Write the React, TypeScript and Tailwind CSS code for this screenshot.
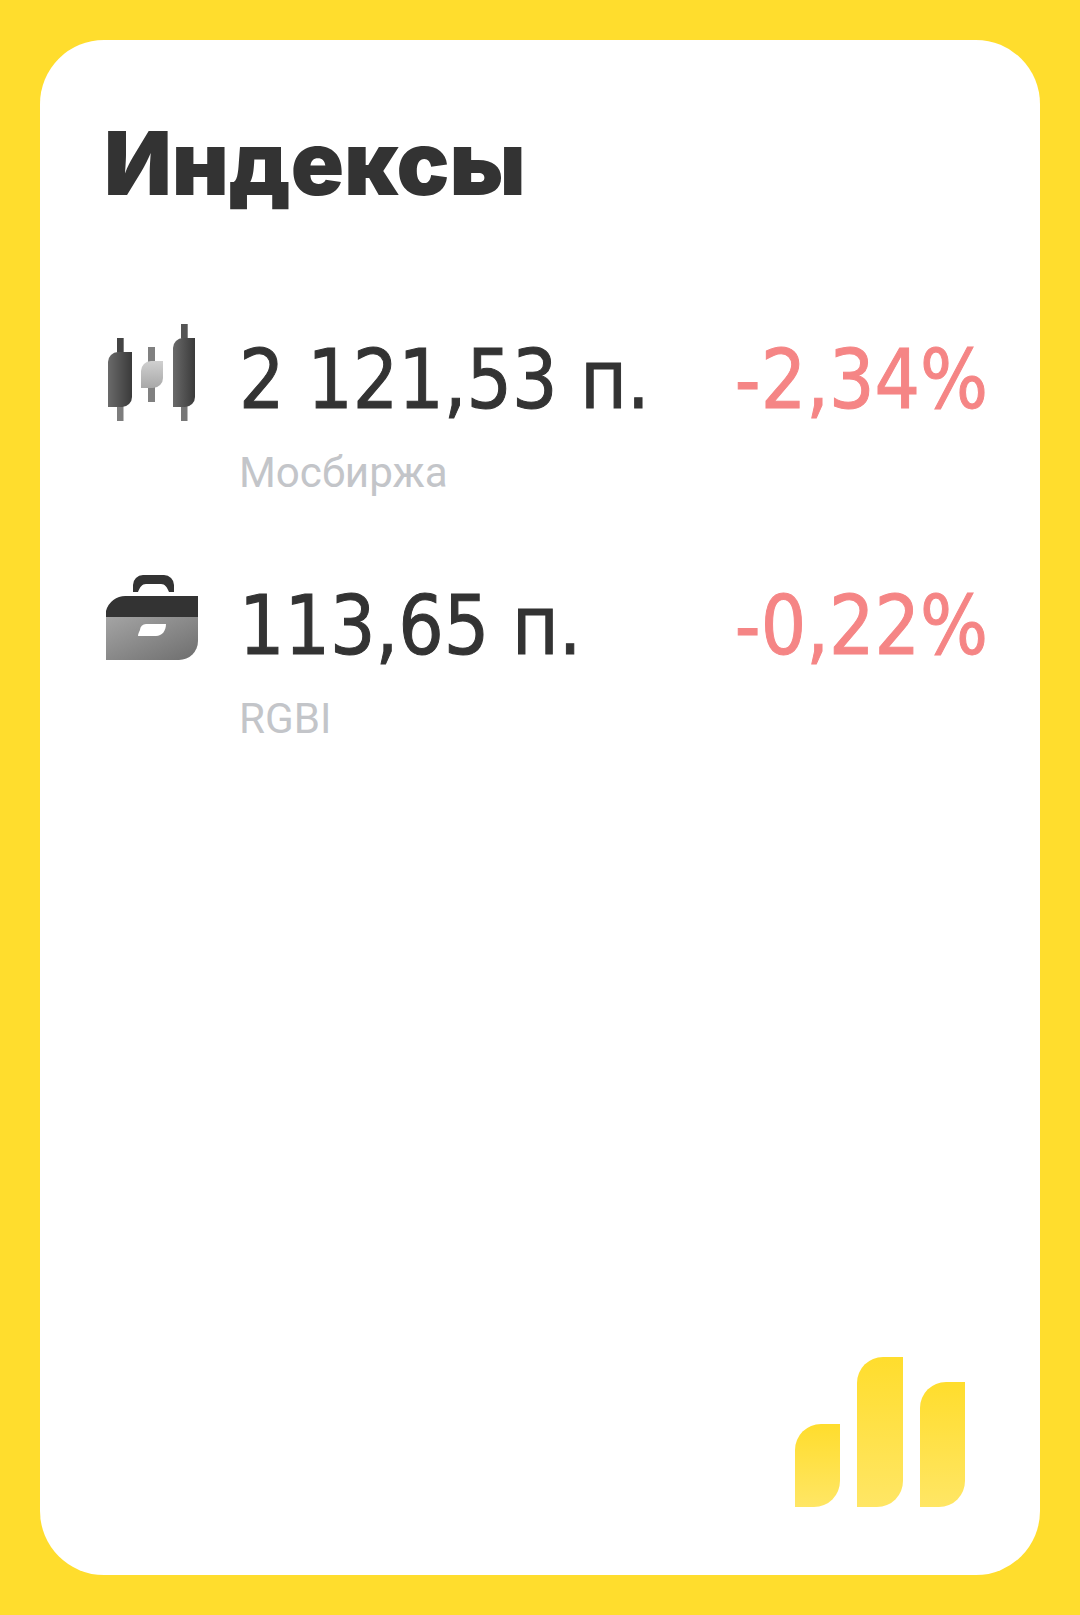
import React from 'react';

const CandlesIcon = () => (
  <svg width="95" height="105" viewBox="0 0 95 105" fill="none" className="shrink-0 -mt-[2px]">
    <defs>
      <linearGradient id="candleDark" x1="0" y1="0" x2="1" y2="0">
        <stop offset="0" stopColor="#6a6a6a" />
        <stop offset="1" stopColor="#3a3a3a" />
      </linearGradient>
      <linearGradient id="candleLight" x1="0" y1="0" x2="0" y2="1">
        <stop offset="0" stopColor="#d0d0d0" />
        <stop offset="1" stopColor="#a8a8a8" />
      </linearGradient>
    </defs>
    <rect x="12" y="18" width="6.5" height="83" fill="#7d7d7d" />
    <path d="M3 42a10 10 0 0 1 10-10h14v45a10 10 0 0 1-10 10H3z" fill="url(#candleDark)" />
    <rect x="12" y="18" width="6.5" height="14" fill="#444" />
    <rect x="43" y="27" width="7" height="55" fill="#808080" />
    <path d="M36 51a10 10 0 0 1 10-10h12v17a10 10 0 0 1-10 10H36z" fill="url(#candleLight)" />
    <rect x="76" y="4" width="6.5" height="97" fill="#777" />
    <path d="M68 28a10 10 0 0 1 10-10h12v59a10 10 0 0 1-10 10H68z" fill="url(#candleDark)" />
    <rect x="76" y="4" width="6.5" height="14" fill="#555" />
  </svg>
);

const BriefcaseIcon = () => (
  <svg width="95" height="90" viewBox="0 0 95 90" fill="none" className="shrink-0 -ml-[2px] mt-[2px]">
    <defs>
      <linearGradient id="caseBody" x1="0" y1="0" x2="1" y2="1">
        <stop offset="0" stopColor="#a4a4a4" />
        <stop offset="1" stopColor="#6e6e6e" />
      </linearGradient>
    </defs>
    <path d="M30 22v-7a10 10 0 0 1 10-10h21a10 10 0 0 1 10 10v7h-5c-2-5-4-8-8-8H43c-4 0-6 3-8 8z" fill="#333" />
    <path d="M3 47v-6a20 20 0 0 1 20-15h72v21z" fill="#333" />
    <path d="M3 47h92v24a19 19 0 0 1-19 19H3z" fill="url(#caseBody)" />
    <path d="M37 60a6 6 0 0 1 6-6h20c0 7-4 12-10 12H35c0-2 1-4 2-6z" fill="#fff" />
  </svg>
);

const LogoBars = () => (
  <svg width="170" height="150" viewBox="0 0 170 150" fill="none">
    <defs>
      <linearGradient id="barFill" x1="0" y1="0" x2="0" y2="1">
        <stop offset="0" stopColor="#ffdd2d" />
        <stop offset="1" stopColor="#ffe665" />
      </linearGradient>
    </defs>
    <path d="M0 93a26 26 0 0 1 26-26h19v57a26 26 0 0 1-26 26H0z" fill="url(#barFill)" />
    <path d="M62 26A26 26 0 0 1 88 0h20v124a26 26 0 0 1-26 26H62z" fill="url(#barFill)" />
    <path d="M125 51a26 26 0 0 1 26-26h19v99a26 26 0 0 1-26 26h-19z" fill="url(#barFill)" />
  </svg>
);

interface IndexRowProps {
  icon: React.ReactNode;
  value: string;
  change: string;
  label: string;
}

const IndexRow: React.FC<IndexRowProps> = ({ icon, value, change, label }) => (
  <div className="flex h-[246px] gap-[39px]">
    <div className="w-[95px] shrink-0">{icon}</div>
    <div className="flex-1 pr-[52px] pt-[22px]">
      <div className="flex items-start justify-between h-[72px]">
        <span className="origin-left scale-x-[0.97] whitespace-nowrap font-['DejaVu_Sans'] text-[82px] leading-[72px] text-[#333333] [font-stretch:condensed] [-webkit-text-stroke:1px_#333333]">
          {value}
        </span>
        <span className="origin-right scale-x-[0.97] whitespace-nowrap font-['DejaVu_Sans'] text-[82px] leading-[72px] text-[#f58585] [font-stretch:condensed] [-webkit-text-stroke:1px_#f58585]">
          {change}
        </span>
      </div>
      <div className="mt-[31px] origin-left scale-x-[0.98] whitespace-nowrap font-['Roboto'] text-[43px] leading-[50px] text-[#c3c5c9]">
        {label}
      </div>
    </div>
  </div>
);

export default function App() {
  return (
    <div className="h-[1615px] w-[1080px] overflow-hidden bg-[#ffdd2d] p-10">
      <div className="flex h-[1535px] w-[1000px] flex-col rounded-[64px] bg-white pl-[65px]">
        <h1 className="-ml-[1px] mt-[78px] font-['Inter'] text-[88px] font-black leading-[90px] text-[#333333]">Индексы</h1>
        <div className="mt-[114px] flex flex-col">
          <IndexRow icon={<CandlesIcon />} value="2 121,53 п." change="-2,34%" label="Мосбиржа" />
          <IndexRow icon={<BriefcaseIcon />} value="113,65 п." change="-0,22%" label="RGBI" />
        </div>
        <div className="mt-auto flex justify-end pb-[68px] pr-[75px]">
          <LogoBars />
        </div>
      </div>
    </div>
  );
}
